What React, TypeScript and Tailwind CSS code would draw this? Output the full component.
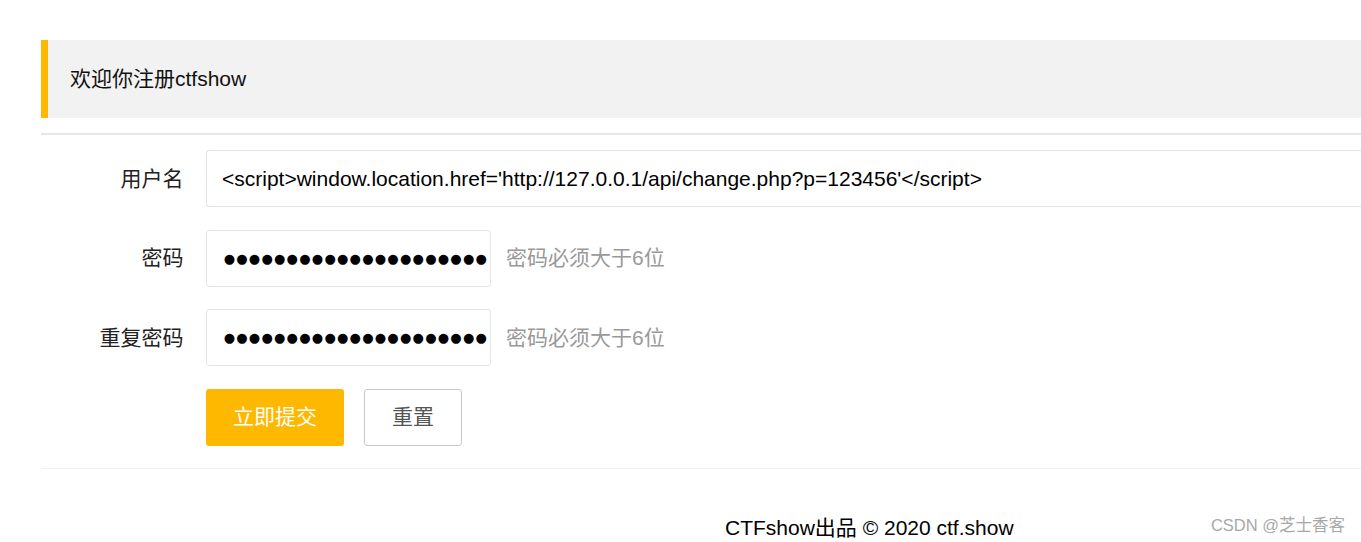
const font = { fontFamily: '"Liberation Sans", "Noto Sans CJK SC", sans-serif' };

function Row({ label, children }: { label: string; children: React.ReactNode }) {
  return (
    <div className="flex items-center mb-[22.5px]">
      <label className="w-[165px] shrink-0 pr-[22.5px] text-right text-[21px] text-[#222]">{label}</label>
      {children}
    </div>
  );
}

function Dots() {
  return (
    <div className="w-[285px] h-[57px] shrink-0 border border-[#e6e6e6] rounded-[3px] bg-white pl-[16px] flex items-center">
      <div className="flex text-[13px] leading-none text-black" style={{ fontFamily: '"DejaVu Sans", sans-serif' }}>
        {Array.from({ length: 21 }).map((_, i) => (
          <span key={i} className="w-[12.6px] text-center">●</span>
        ))}
      </div>
    </div>
  );
}

export default function App() {
  return (
    <div className="relative w-[1361px] h-[542px] overflow-hidden bg-white pt-[40px] pl-[41px]" style={font}>
      {/* welcome banner */}
      <div className="h-[78px] bg-[#f2f2f2] border-l-[7px] border-[#FFB800] pl-[22px] flex items-center text-[21px] text-[#111]">
        欢迎你注册ctfshow
      </div>
      <div className="mt-[15px] h-[2px] bg-[#e6e6e6]" />

      <form className="pt-[15px]">
        <Row label="用户名">
          <div className="flex-1 h-[57px] border border-[#e6e6e6] border-r-0 rounded-l-[3px] bg-white pl-[15px] flex items-center text-[21px] text-black whitespace-nowrap">
            {"<script>window.location.href='http://127.0.0.1/api/change.php?p=123456'</script>"}
          </div>
        </Row>
        <Row label="密码">
          <Dots />
          <span className="ml-[15px] text-[21px] text-[#999]">密码必须大于6位</span>
        </Row>
        <Row label="重复密码">
          <Dots />
          <span className="ml-[15px] text-[21px] text-[#999]">密码必须大于6位</span>
        </Row>
        <div className="flex items-center pl-[165px] mb-[22px]">
          <button type="button" className="h-[57px] px-[27px] bg-[#FFB800] text-white text-[21px] rounded-[3px]">
            立即提交
          </button>
          <button type="button" className="ml-[20px] h-[57px] px-[27px] bg-white border border-[#c9c9c9] text-[#555] text-[21px] rounded-[3px]">
            重置
          </button>
        </div>
      </form>
      <div className="h-px bg-[#eeeeee]" />

      <div className="mt-[46px] pl-[684px] text-[21px] text-black leading-[26px] whitespace-nowrap">
        CTFshow出品 © 2020 ctf.show
      </div>

      <div className="absolute right-[16px] top-[513px] text-[16.5px] text-[#a8a8a8]">CSDN @芝士香客</div>
    </div>
  );
}
